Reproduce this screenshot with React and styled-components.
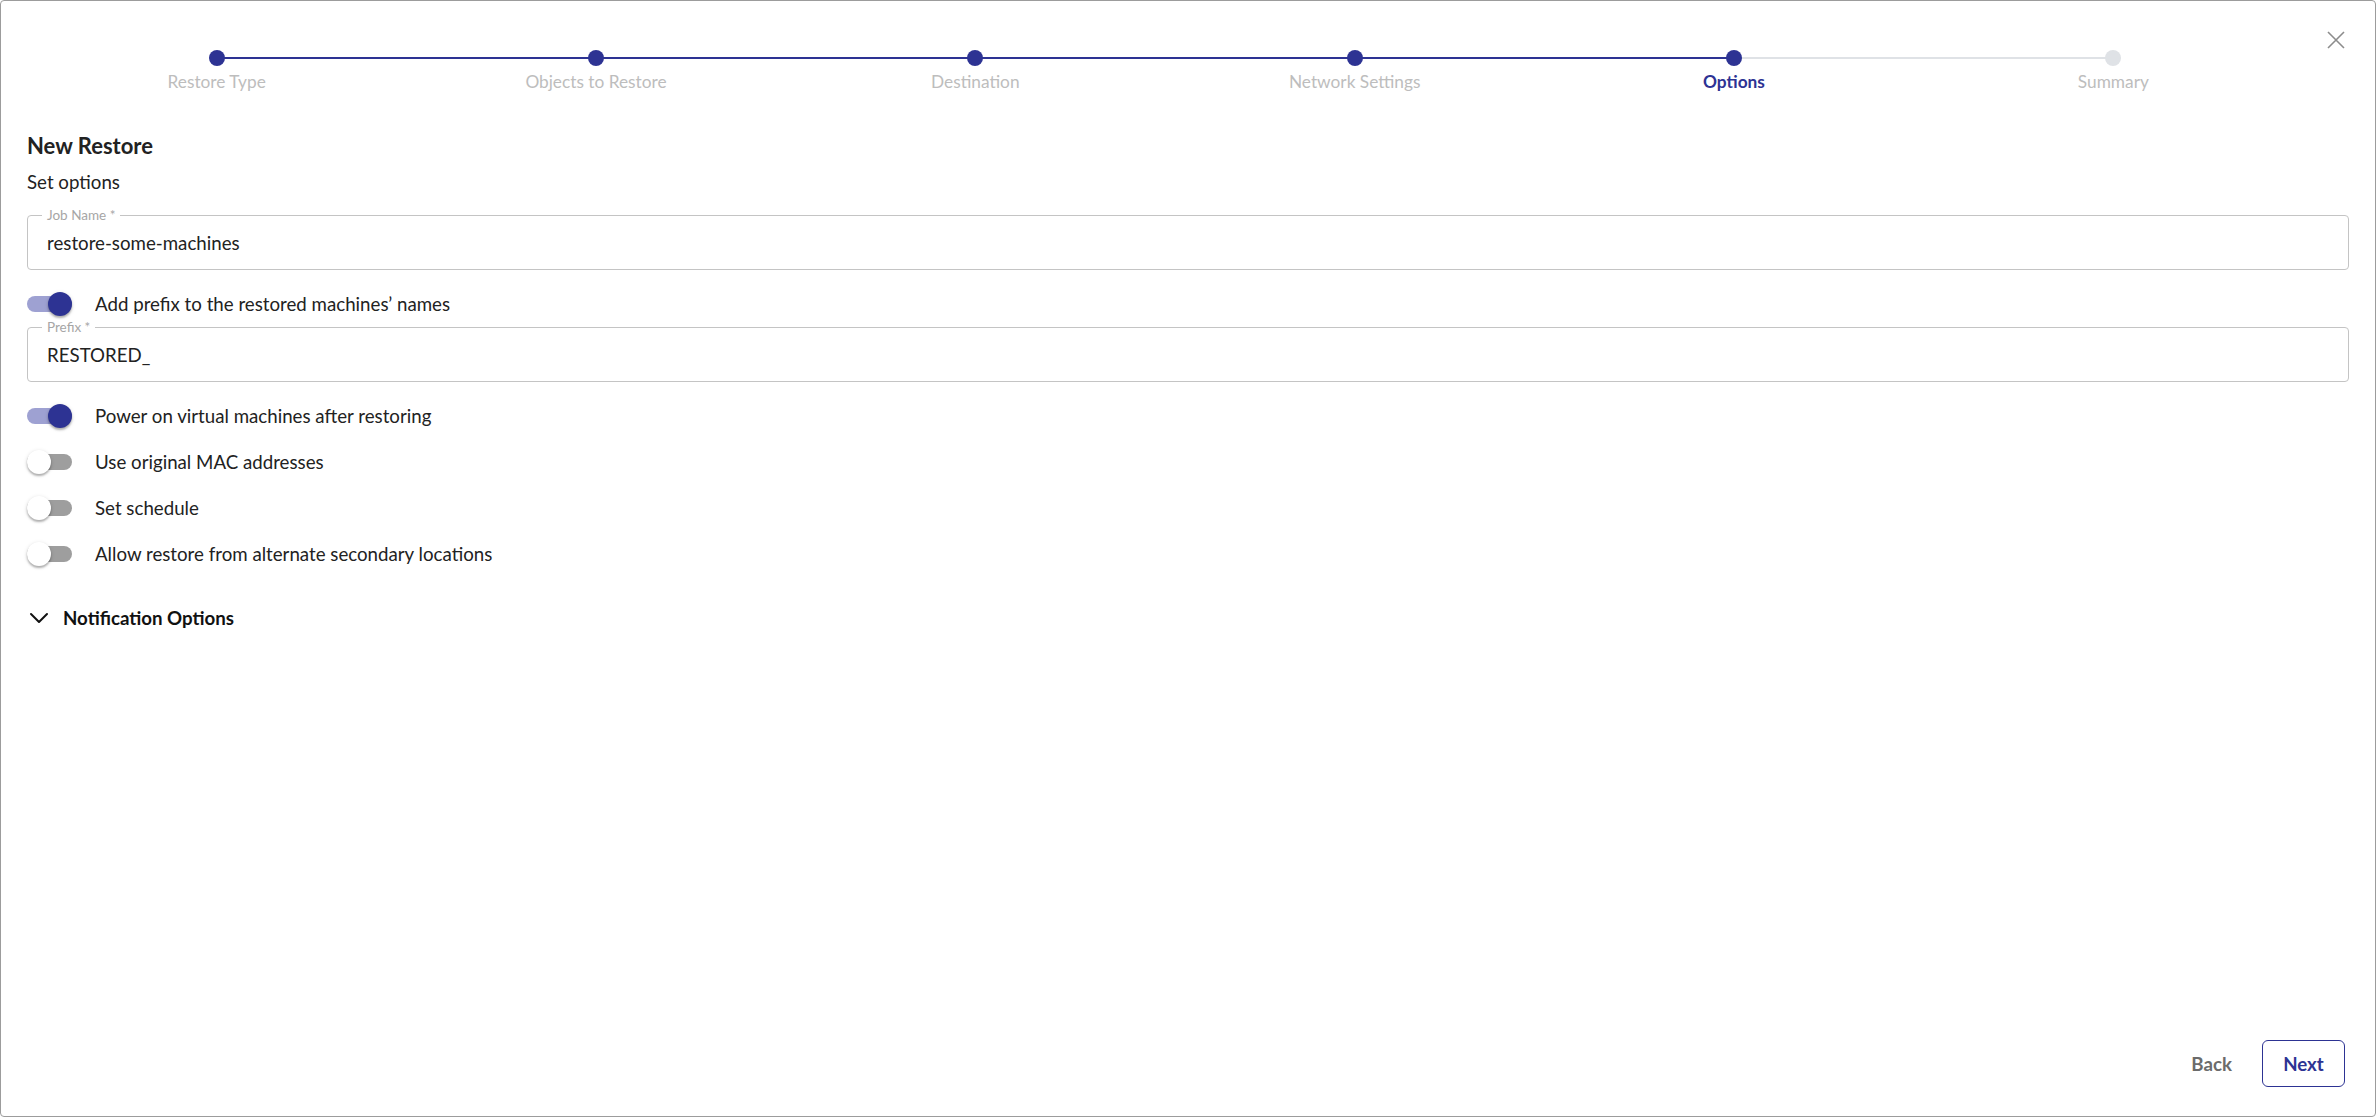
import React, { useState } from "react";
import styled, { createGlobalStyle } from "styled-components";

const primary = "#2d3393";

const GlobalStyle = createGlobalStyle`
  html, body {
    margin: 0;
    height: 100%;
  }
  body {
    font-family: Lato, "Noto Sans", sans-serif;
    color: #222;
    background: #fff;
  }
  #root {
    height: 100%;
  }
  * {
    box-sizing: border-box;
  }
`;

const Window = styled.div`
  height: 100vh;
  border: 1px solid #9c9c9c;
  border-radius: 4px;
  padding: 0 26px 29px 26px;
  display: flex;
  flex-direction: column;
`;

const Header = styled.div`
  display: flex;
  gap: 20px;
  padding-top: 49px;
`;

const Stepper = styled.ol`
  flex: 1;
  display: grid;
  grid-template-columns: repeat(6, 1fr);
  margin: 0;
  padding: 0;
  list-style: none;
`;

const Step = styled.li`
  position: relative;
  display: flex;
  flex-direction: column;
  align-items: center;
  gap: 5px;

  &:not(:last-child)::after {
    content: "";
    position: absolute;
    top: 7px;
    left: 50%;
    width: 100%;
    height: 2px;
    background: ${({ linked }) => (linked ? primary : "#dfe2e6")};
  }
`;

const Dot = styled.span`
  position: relative;
  z-index: 1;
  width: 16px;
  height: 16px;
  border-radius: 50%;
  background: ${({ done }) => (done ? primary : "#dfe2e6")};
`;

const StepLabel = styled.span`
  font-size: 17.3px;
  line-height: 22px;
  color: ${({ active }) => (active ? primary : "#bdbdbd")};
  font-weight: ${({ active }) => (active ? 700 : 400)};
`;

const CloseButton = styled.button`
  width: 26px;
  height: 26px;
  margin-top: -23px;
  padding: 0;
  border: none;
  background: none;
  display: flex;
  align-items: center;
  justify-content: center;
  cursor: pointer;
`;

const Content = styled.div`
  flex: 1;
  display: flex;
  flex-direction: column;
`;

const Title = styled.h2`
  margin: 39px 0 0;
  font-size: 22px;
  line-height: 28px;
  font-weight: 700;
  color: #222;
`;

const Subtitle = styled.p`
  margin: 9px 0 20px;
  font-size: 18.7px;
  line-height: 26px;
`;

const Field = styled.label`
  position: relative;
  display: flex;
  align-items: center;
  height: 55px;
  border: 1px solid #c4c4c4;
  border-radius: 4px;
  padding: 0 19px;
`;

const FieldLabel = styled.span`
  position: absolute;
  top: -8px;
  left: 14px;
  padding: 0 5px;
  background: #fff;
  font-size: 13.5px;
  line-height: 14px;
  color: #a6a6a6;
`;

const FieldInput = styled.input`
  flex: 1;
  border: none;
  outline: none;
  padding: 0;
  font-family: inherit;
  font-size: 18.7px;
  color: #222;
  background: transparent;
`;

const ToggleRow = styled.label`
  display: flex;
  align-items: center;
  gap: 23px;
  height: 46px;
  margin-top: ${({ spacing }) => spacing || "0"};
  font-size: 18.7px;
  cursor: pointer;
`;

const Track = styled.span`
  position: relative;
  width: 45px;
  height: 16px;
  border-radius: 8px;
  flex-shrink: 0;
  background: ${({ on }) => (on ? "#9ea1d2" : "#9e9e9e")};
`;

const Thumb = styled.span`
  position: absolute;
  top: -4px;
  left: ${({ on }) => (on ? "21px" : "0")};
  width: 24px;
  height: 24px;
  border-radius: 50%;
  background: ${({ on }) => (on ? primary : "#fff")};
  box-shadow: 0 2px 2px rgba(0, 0, 0, 0.25), 0 1px 4px rgba(0, 0, 0, 0.14);
`;

const Section = styled.button`
  display: flex;
  align-items: center;
  gap: 14px;
  height: 40px;
  margin-top: 21px;
  padding: 0 0 0 2px;
  border: none;
  background: none;
  font-family: inherit;
  font-size: 18.7px;
  font-weight: 700;
  color: #111;
  cursor: pointer;
  align-self: flex-start;
`;

const Footer = styled.div`
  display: flex;
  justify-content: flex-end;
  align-items: center;
  gap: 14px;
  padding-right: 4px;
`;

const ActionButton = styled.button`
  height: 47px;
  padding: 0 ${({ outlined }) => (outlined ? "20px" : "16px")};
  min-width: ${({ outlined }) => (outlined ? "83px" : "0")};
  border: ${({ outlined }) => (outlined ? `1.5px solid ${primary}` : "none")};
  border-radius: 6px;
  background: #fff;
  font-family: inherit;
  font-size: 18.7px;
  font-weight: 700;
  color: ${({ outlined }) => (outlined ? primary : "#6b6b6b")};
  cursor: pointer;
`;

const steps = [
  "Restore Type",
  "Objects to Restore",
  "Destination",
  "Network Settings",
  "Options",
  "Summary",
];

const CloseIcon = () => (
  <svg width="18" height="18" viewBox="0 0 18 18">
    <path d="M1 1 L17 17 M17 1 L1 17" stroke="#8c8c8c" strokeWidth="1.6" fill="none" />
  </svg>
);

const ChevronIcon = () => (
  <svg width="20" height="12" viewBox="0 0 20 12">
    <path d="M2 2 L10 10 L18 2" stroke="#111" strokeWidth="2" fill="none" strokeLinecap="round" strokeLinejoin="round" />
  </svg>
);

const Toggle = ({ on }) => (
  <Track on={on}>
    <Thumb on={on} />
  </Track>
);

export default function App() {
  const active = 4;
  const [toggles, setToggles] = useState({
    prefix: true,
    power: true,
    mac: false,
    schedule: false,
    alternate: false,
  });

  const flip = (key) => (e) => {
    e.preventDefault();
    setToggles((t) => ({ ...t, [key]: !t[key] }));
  };

  return (
    <>
      <GlobalStyle />
      <Window>
        <Header>
          <Stepper>
            {steps.map((name, i) => (
              <Step key={name} linked={i < active}>
                <Dot done={i <= active} />
                <StepLabel active={i === active}>{name}</StepLabel>
              </Step>
            ))}
          </Stepper>
          <CloseButton aria-label="Close">
            <CloseIcon />
          </CloseButton>
        </Header>

        <Content>
          <Title>New Restore</Title>
          <Subtitle>Set options</Subtitle>

          <Field>
            <FieldLabel>Job Name *</FieldLabel>
            <FieldInput defaultValue="restore-some-machines" />
          </Field>

          <ToggleRow spacing="11px" onClick={flip("prefix")}>
            <Toggle on={toggles.prefix} />
            Add prefix to the restored machines’ names
          </ToggleRow>

          {toggles.prefix && (
            <Field>
              <FieldLabel>Prefix *</FieldLabel>
              <FieldInput defaultValue="RESTORED_" />
            </Field>
          )}

          <ToggleRow spacing="11px" onClick={flip("power")}>
            <Toggle on={toggles.power} />
            Power on virtual machines after restoring
          </ToggleRow>
          <ToggleRow onClick={flip("mac")}>
            <Toggle on={toggles.mac} />
            Use original MAC addresses
          </ToggleRow>
          <ToggleRow onClick={flip("schedule")}>
            <Toggle on={toggles.schedule} />
            Set schedule
          </ToggleRow>
          <ToggleRow onClick={flip("alternate")}>
            <Toggle on={toggles.alternate} />
            Allow restore from alternate secondary locations
          </ToggleRow>

          <Section>
            <ChevronIcon />
            Notification Options
          </Section>
        </Content>

        <Footer>
          <ActionButton>Back</ActionButton>
          <ActionButton outlined>Next</ActionButton>
        </Footer>
      </Window>
    </>
  );
}
